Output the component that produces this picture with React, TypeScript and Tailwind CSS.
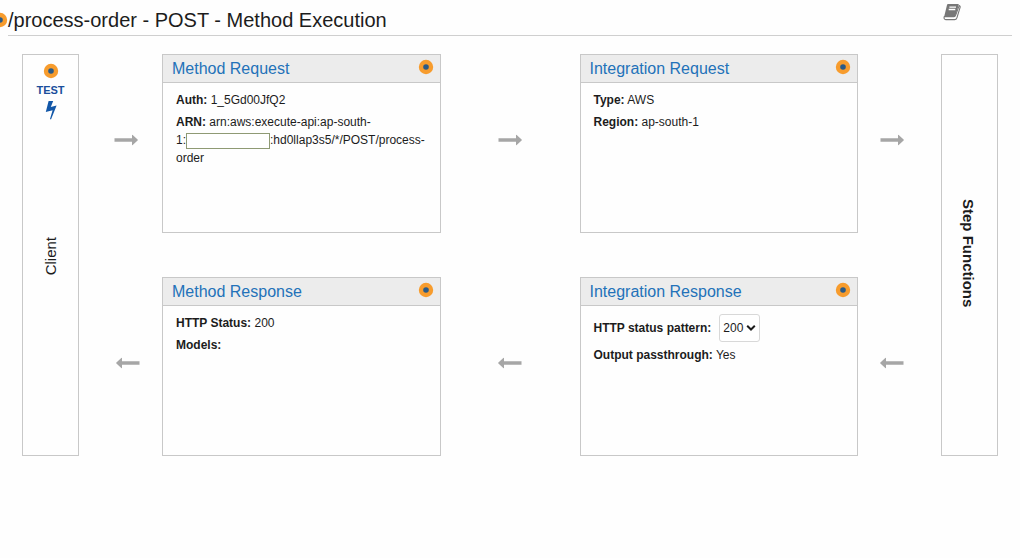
import { useState, type ReactNode } from 'react';

function Marker({ className = '' }: { className?: string }) {
    return (
        <svg viewBox="0 0 16 16" className={`w-4 h-4 shrink-0 ${className}`} aria-hidden="true">
            <circle cx="8" cy="8" r="7.2" fill="#f79c2d" />
            <circle cx="8" cy="8" r="2.8" fill="#2b5a86" />
        </svg>
    );
}

function Arrow({ direction }: { direction: 'left' | 'right' }) {
    return (
        <svg viewBox="0 0 24 12" className={`w-6 h-3 fill-[#a6a6a6] ${direction === 'left' ? 'rotate-180' : ''}`} aria-hidden="true">
            <path d="M0.5 4.2H18V1.2Q18 0.4 18.7 1L23.6 5.5Q24.1 6 23.6 6.5L18.7 11Q18 11.6 18 10.8V7.8H0.5Z" />
        </svg>
    );
}

function BookIcon() {
    return (
        <svg viewBox="0 0 18 18" className="w-[18px] h-[18px]" aria-hidden="true">
            <path d="M5 1H15.2Q16 1 15.7 2L12.6 12.4Q12.2 13.6 11 13.6H1.2L4 2Q4.2 1 5 1Z" fill="#777" />
            <path d="M16.2 2.6Q17.5 3 17.1 4.4L13.9 14.8Q13.3 16.6 11.6 16.6H2.8Q0.6 16.3 1.2 13.6H11Q12.2 13.6 12.6 12.4Z" fill="#fff" stroke="#777" strokeWidth="1.1" strokeLinejoin="round" />
            <path d="M6.4 4.1H13M5.7 6.5H12.3" stroke="#fff" strokeWidth="1.3" />
        </svg>
    );
}

function BoltIcon() {
    return (
        <svg viewBox="0 0 12 20" className="w-3 h-5 fill-[#1257a8]" aria-hidden="true">
            <path d="M3.6 1H8.2L5.8 7L11.6 5.4L6 19.4L5 19L7.6 10.2L0.8 12Z" />
        </svg>
    );
}

function Panel({ title, children }: { title: string; children: ReactNode }) {
    return (
        <section className="min-h-[179px] border border-[#c8c8c8]">
            <div className="flex items-start justify-between h-7 pl-[9px] pr-1.5 border-b border-[#c8c8c8] bg-[#ececec]">
                <h2 className="text-base leading-7">
                    <a href="#" className="text-[#2372b9] hover:underline">{title}</a>
                </h2>
                <Marker className="mt-1" />
            </div>
            <div className="flex flex-col gap-1 px-[13px] pt-2 text-xs leading-[18px]">
                {children}
            </div>
        </section>
    );
}

function ArrowCell({ direction, align = 'justify-center' }: { direction: 'left' | 'right'; align?: string }) {
    return (
        <div className={`flex items-center pb-2 ${align}`}>
            <Arrow direction={direction} />
        </div>
    );
}

export default function App() {
    const [pattern, setPattern] = useState('200');

    return (
        <div className="min-h-screen overflow-x-hidden bg-[#fefefe] text-[#1c1c1c] font-['Liberation_Sans',Arial,sans-serif]">
            <header className="relative flex items-start justify-between ml-2 mr-2 h-9 border-b border-[#cfcfcf]">
                <Marker className="absolute -left-4 top-3" />
                <h1 className="pt-1.5 text-xl leading-7">/process-order - POST - Method Execution</h1>
                <button className="mr-[51px] pt-[3px]" aria-label="Documentation">
                    <BookIcon />
                </button>
            </header>

            <main className="grid grid-cols-[57px_83px_1fr_139px_1fr_83px_57px] gap-y-11 px-[22px] pt-[18px]">
                <aside className="row-span-2 flex flex-col items-center border border-[#c8c8c8] pt-2">
                    <Marker />
                    <button className="flex flex-col items-center gap-0.5 pt-[3px] text-[11px] leading-4 font-bold text-[#1a4f9c]">
                        TEST
                        <BoltIcon />
                    </button>
                    <span className="mt-[117px] text-[15px] leading-6 [writing-mode:vertical-rl] rotate-180">Client</span>
                </aside>
                <ArrowCell direction="right" align="justify-end pr-6" />
                <Panel title="Method Request">
                    <p><b>Auth:</b> 1_5Gd00JfQ2</p>
                    <p>
                        <b>ARN:</b> arn:aws:execute-api:ap-south-<br />
                        1:<span className="inline-block w-[84px] h-4 align-middle border border-[#8f9a74] bg-white" />:hd0llap3s5/*/POST/process-<br />
                        order
                    </p>
                </Panel>
                <ArrowCell direction="right" />
                <Panel title="Integration Request">
                    <p><b>Type:</b> AWS</p>
                    <p><b>Region:</b> ap-south-1</p>
                </Panel>
                <ArrowCell direction="right" align="pl-[22px]" />
                <aside className="row-span-2 flex items-center justify-center border border-[#c8c8c8] pr-1 pb-1">
                    <span className="text-[15px] leading-6 font-bold [writing-mode:vertical-rl]">Step Functions</span>
                </aside>

                <ArrowCell direction="left" align="justify-end pr-[22px]" />
                <Panel title="Method Response">
                    <p><b>HTTP Status:</b> 200</p>
                    <p><b>Models:</b></p>
                </Panel>
                <ArrowCell direction="left" />
                <Panel title="Integration Response">
                    <div className="flex items-center gap-2">
                        <label htmlFor="pattern" className="font-bold">HTTP status pattern:</label>
                        <div className="relative">
                            <select
                                id="pattern"
                                value={pattern}
                                onChange={e => setPattern(e.target.value)}
                                className="block appearance-none w-[41px] h-7 pl-[3px] rounded-[3px] border border-[#d8d8d8] bg-white"
                            >
                                <option value="200">200</option>
                            </select>
                            <svg viewBox="0 0 10 8" className="pointer-events-none absolute right-1 top-2.5 w-2.5 h-2" aria-hidden="true">
                                <path d="M1.2 1.8L5 5.5L8.8 1.8" fill="none" stroke="#1c1c1c" strokeWidth="2" />
                            </svg>
                        </div>
                    </div>
                    <p><b>Output passthrough:</b> Yes</p>
                </Panel>
                <ArrowCell direction="left" align="pl-[22px]" />
            </main>
        </div>
    );
}
